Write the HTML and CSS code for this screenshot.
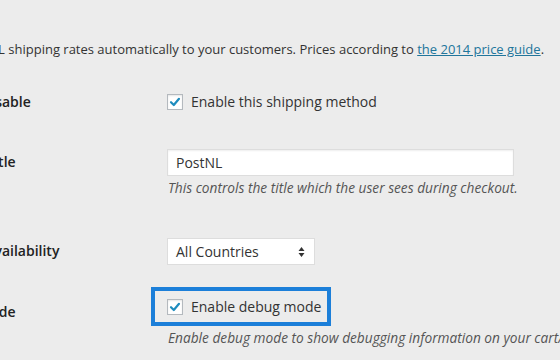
FILE: index.html
```html
<!DOCTYPE html>
<html lang="en">
<head>
    <meta charset="UTF-8">
    <title>PostNL shipping settings</title>
    <link rel="stylesheet" href="styles.css">
</head>
<body>
    <div class="page">
        <p class="intro">Offer PostNL shipping rates automatically to your customers. Prices according to <a href="#">the 2014 price guide</a>.</p>

        <!-- Enable/Disable -->
        <div class="row row-enable">
            <div class="label">Enable/Disable</div>
            <div class="field">
                <label class="check">
                    <span class="box">
                        <svg width="12" height="12" viewBox="0 0 12 12"><path d="M2 6.2 L4.8 9 L10 2.8" fill="none" stroke="#1e8cbe" stroke-width="2.2" stroke-linecap="round" stroke-linejoin="round"/></svg>
                    </span>
                    Enable this shipping method
                </label>
            </div>
        </div>

        <!-- Method Title -->
        <div class="row row-title">
            <div class="label tall">Method Title</div>
            <div class="field">
                <div class="text-input">PostNL</div>
                <p class="description">This controls the title which the user sees during checkout.</p>
            </div>
        </div>

        <!-- Method availability -->
        <div class="row row-avail">
            <div class="label tall">Method availability</div>
            <div class="field">
                <div class="select">
                    <span>All Countries</span>
                    <svg width="7" height="12" viewBox="0 0 7 12"><path d="M3.5 1 L6.5 5 L0.5 5 Z M3.5 11 L6.5 7 L0.5 7 Z" fill="#333"/></svg>
                </div>
            </div>
        </div>

        <!-- Debug Mode -->
        <div class="row row-debug">
            <div class="label debug-label">Debug Mode</div>
            <div class="field">
                <div class="highlight">
                    <label class="check">
                        <span class="box">
                            <svg width="12" height="12" viewBox="0 0 12 12"><path d="M2 6.2 L4.8 9 L10 2.8" fill="none" stroke="#1e8cbe" stroke-width="2.2" stroke-linecap="round" stroke-linejoin="round"/></svg>
                        </span>
                        Enable debug mode
                    </label>
                </div>
                <p class="description">Enable debug mode to show debugging information on your cart/checkout.</p>
            </div>
        </div>
    </div>
</body>
</html>
```

FILE: styles.css
```css
/* page */
body {
    margin: 0;
    background-color: #ececec;
    font-family: 'Open Sans', 'Noto Sans', sans-serif;
    color: #444;
    overflow: hidden;
    height: 360px;
}

.page {
    margin-left: -70px;
    width: 680px;
}

.intro {
    margin: 39px 0 0 0;
    font-size: 13px;
    line-height: 20px;
    color: #333;
    white-space: nowrap;
    text-indent: -3px;
}

.intro a {
    color: #21759b;
    text-decoration: underline;
}

/* rows */
.row {
    display: flex;
}

.label {
    width: 237px;
    flex-shrink: 0;
    font-size: 14px;
    font-weight: 600;
    color: #222;
    line-height: 16px;
}

.label.tall {
    line-height: 26px;
}

.row-enable { margin-top: 35px; }
.row-title { margin-top: 39px; }
.row-avail { margin-top: 41px; }
.row-debug { margin-top: 22px; }

.debug-label {
    line-height: 20px;
    padding-top: 15px;
}

/* checkbox */
.check {
    display: flex;
    align-items: center;
    gap: 8px;
    font-size: 14px;
    line-height: 16px;
    color: #333;
}

.box {
    width: 14px;
    height: 14px;
    border: 1px solid #b4b9be;
    background: #fff;
    box-shadow: inset 0 1px 2px rgba(0, 0, 0, 0.1);
    display: flex;
    align-items: center;
    justify-content: center;
}

/* inputs */
.text-input {
    width: 337px;
    height: 25px;
    border: 1px solid #ddd;
    background: #fff;
    box-shadow: inset 0 1px 2px rgba(0, 0, 0, 0.07);
    padding-left: 8px;
    font-size: 14px;
    line-height: 25px;
    color: #333;
}

.description {
    margin: 3px 0 0 1px;
    font-size: 13.7px;
    line-height: 18px;
    font-style: italic;
    color: #555;
    white-space: nowrap;
}

.select {
    width: 129px;
    height: 25px;
    border: 1px solid #ddd;
    background: #fff;
    padding: 0 9px 0 8px;
    display: flex;
    align-items: center;
    justify-content: space-between;
    font-size: 14px;
    color: #333;
}

/* highlight box */
.highlight {
    margin-left: -16px;
    width: 160px;
    height: 31px;
    border: 4px solid #1c7fd9;
    padding-left: 12px;
    display: flex;
    align-items: center;
}
```
